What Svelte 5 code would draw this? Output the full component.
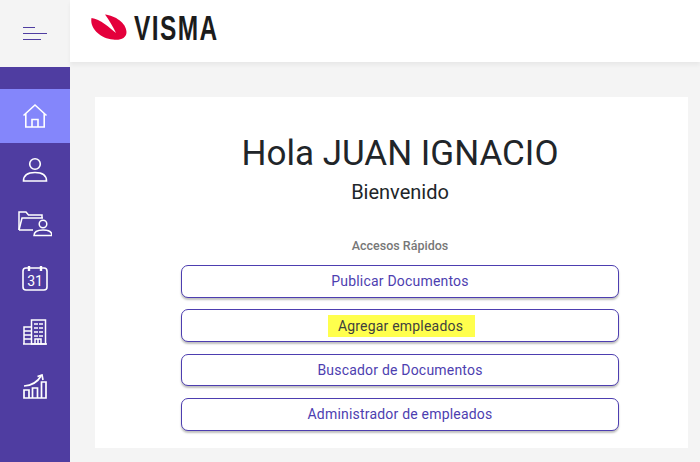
<script>
	const links = [
		{ label: 'Publicar Documentos' },
		{ label: 'Agregar empleados', marked: true },
		{ label: 'Buscador de Documentos' },
		{ label: 'Administrador de empleados' }
	];
</script>

<div class="page">
	<aside class="side">
		<div class="burger">
			<svg width="24" height="13" viewBox="0 0 24 13">
				<path d="M0 .5h12M0 6.500h24M0 12.500h18" fill="none" stroke="#4f3da1" stroke-width="1" />
			</svg>
		</div>
		<nav class="menu">
			<a class="item active" href="#home" aria-label="Inicio">
				<svg width="26" height="26" viewBox="0 0 26 26" fill="none" stroke="#fff" stroke-width="1.6">
					<path d="M1.500 12.500 13 2l11.500 10.500" />
					<path d="M3.800 10.500V24h18.400V10.500" />
					<path d="M10 24v-7.500h6V24" />
				</svg>
			</a>
			<a class="item" href="#perfil" aria-label="Perfil">
				<svg width="26" height="26" viewBox="0 0 26 26" fill="none" stroke="#fff" stroke-width="1.6">
					<circle cx="13" cy="7" r="5.300" />
					<path d="M1.500 24c0-5.500 4.500-8.500 11.500-8.500s11.500 3 11.500 8.500z" />
				</svg>
			</a>
			<a class="item" href="#documentos" aria-label="Documentos">
				<svg width="34" height="26" viewBox="0 0 34 26" fill="none" stroke="#fff" stroke-width="1.500">
					<path d="M1 19V1h7l2.500 3H24v3" />
					<path d="M1 19 4 7h21" />
					<path d="M1 19h14" />
					<circle cx="25" cy="13" r="3.800" />
					<path d="M16 24.500c0-4 3.500-5.500 9-5.500s9 1.500 9 5.500z" />
				</svg>
			</a>
			<a class="item" href="#calendario" aria-label="Calendario">
				<svg width="26" height="26" viewBox="0 0 26 26" fill="none" stroke="#fff" stroke-width="1.600">
					<rect x="1" y="3" width="24" height="22" rx="3" />
					<path d="M7 1v5M19 1v5" stroke-width="2.400" />
					<text x="13" y="21" class="day">31</text>
				</svg>
			</a>
			<a class="item" href="#empresas" aria-label="Empresas">
				<svg width="26" height="26" viewBox="0 0 26 26" fill="none" stroke="#fff" stroke-width="1.500">
					<path d="M1 25h24" />
					<rect x="9.500" y="1" width="14" height="24" />
					<path d="M2 25V8h7.500" />
					<path d="M2 12h7M2 16h7M2 20h7" />
					<path d="M12 5h9M12 9h9M12 13h9M12 17h9" stroke-dasharray="4 1" />
					<path d="M13 25v-5h6v5M16 20v5" />
				</svg>
			</a>
			<a class="item" href="#indicadores" aria-label="Indicadores">
				<svg width="24" height="25" viewBox="0 0 24 25" fill="none" stroke="#fff" stroke-width="1.700">
					<path d="M1 24V16h5v8zM9.500 24V14h5v10zM18.500 24V8h4.500v16zM1 24h22" />
					<path d="M1 12c7-.5 13-3 17-10" />
					<path d="M14.500 2.500 19 1l1 5" />
				</svg>
			</a>
		</nav>
	</aside>

	<div class="right">
		<header class="top">
			<svg class="logo" width="180" height="44" viewBox="0 -8 180 44">
				<path fill="#e4003c" d="M1.500 5C10 6 20 15 26 20 23 14 19 7 15 1.500 25 2.500 36.500 10 36.500 19 36.500 25.500 30 27.500 23 26.500 10 25.500-.5 15 1.500 5z" />
				<text transform="translate(44 27) scale(.7 1)" class="brand">VISMA</text>
			</svg>
		</header>

		<main class="main">
			<section class="card">
				<h1>Hola JUAN IGNACIO</h1>
				<h2>Bienvenido</h2>
				<p class="quick">Accesos Rápidos</p>
				<div class="links">
					{#each links as link}
						<button class="link" class:marked={link.marked}>
							<span>{link.label}</span>
						</button>
					{/each}
				</div>
			</section>
		</main>
	</div>
</div>

<style>
	:global(body) {
		margin: 0;
		background: #f4f4f4;
		font-family: Roboto, "Liberation Sans", sans-serif;
	}

	.page {
		display: flex;
		width: 700px;
		height: 462px;
		overflow: hidden;
		background: #f4f4f4;
	}

	.side {
		width: 70px;
		flex: none;
		display: flex;
		flex-direction: column;
	}

	.burger {
		height: 67px;
		flex: none;
		display: flex;
		align-items: center;
		justify-content: center;
		background: #f4f4f4;
	}

	.menu {
		flex: 1;
		background: #4f3da1;
		padding-top: 22px;
	}

	.item {
		height: 54px;
		display: flex;
		align-items: center;
		justify-content: center;
	}

	.active {
		background: #8486fb;
	}

	.day {
		fill: #fff;
		stroke: none;
		font-size: 14px;
		font-family: Roboto, sans-serif;
		text-anchor: middle;
	}

	.right {
		flex: 1;
		display: flex;
		flex-direction: column;
	}

	.top {
		height: 62px;
		flex: none;
		display: flex;
		align-items: flex-start;
		padding: 5px 0 0 20px;
		box-sizing: border-box;
		background: #fff;
		box-shadow: 0 3px 4px rgb(0 0 0 / 0.05);
	}

	.brand {
		fill: #1c1c1c;
		font-size: 35px;
		font-weight: 700;
		letter-spacing: 2px;
		font-family: "Liberation Sans", sans-serif;
	}

	.main {
		flex: 1;
		padding: 35px 12px 14px 25px;
	}

	.card {
		height: 100%;
		background: #fff;
		display: flex;
		flex-direction: column;
		align-items: center;
		padding: 35px 0 0 17px;
		box-sizing: border-box;
	}

	h1 {
		margin: 0;
		font-size: 35px;
		line-height: 44px;
		font-weight: 400;
		color: #212529;
	}

	h2 {
		margin: 3px 0 0;
		font-size: 20px;
		line-height: 26px;
		font-weight: 400;
		color: #212529;
	}

	.quick {
		margin: 33px 0 0;
		font-size: 12.500px;
		line-height: 16px;
		font-weight: 500;
		color: #777;
	}

	.links {
		width: 438px;
		margin-top: 11px;
		display: flex;
		flex-direction: column;
		gap: 11.900px;
	}

	.link {
		height: 32.500px;
		padding: 0;
		border: 1px solid #4d3eb0;
		border-radius: 7px;
		background: #fff;
		box-shadow: 0 2px 2px rgb(0 0 0 / 0.25);
		color: #4d3eb0;
		font-family: inherit;
		font-size: 14px;
		letter-spacing: 0.2px;
		cursor: pointer;
	}

	.link span {
		display: inline-block;
		line-height: 22px;
	}

	.marked span {
		margin-left: 3px;
		padding: 0 12px 0 10px;
		background: #ffff4d;
		color: #3f3f3f;
	}
</style>
